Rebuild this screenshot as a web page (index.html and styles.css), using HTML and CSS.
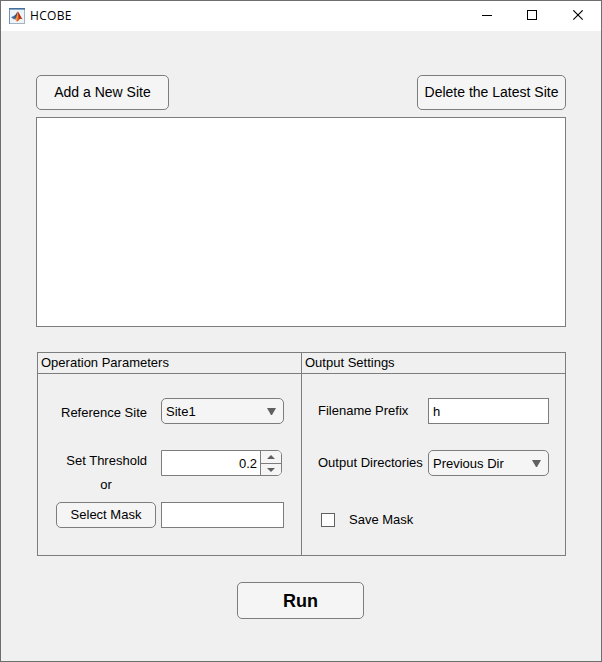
FILE: index.html
```html
<!DOCTYPE html>
<html lang="en">
<head>
<meta charset="utf-8">
<title>HCOBE</title>
<link rel="stylesheet" href="styles.css">
</head>
<body>
<div class="window">
  <header class="titlebar">
    <svg class="app-icon" width="16" height="16" viewBox="0 0 16 16">
      <rect x=".5" y=".5" width="15" height="15" fill="#eef3f7" stroke="#a3b3c2"/>
      <path d="M0 .8h16" stroke="#44719c" stroke-width="1.600"/>
      <path d="M.5 1v15" stroke="#7891a8"/>
      <path d="M2 9.200l3-1.400 2.200 1.700L5 11.400z" fill="#3b78b5"/>
      <path d="M5 7.800c2-.3 2.200-3.500 4-4.300L7.500 9.300 5.800 11z" fill="#335780"/>
      <path d="M9 3.500c1.400 1.500 2.500 5.500 4.800 8-2-1.300-3-.7-3.800.5-.7 1-1.500 1.500-2.200 1.500-.3-1.600-1-2.200-2.200-2.300C7.500 10 8 5.500 9 3.500z" fill="#d9531e"/>
      <path d="M9 4c.2 3 .1 6-1.200 9.200-.4-1-.9-1.600-1.500-1.800C8 9.500 8.400 6.500 9 4z" fill="#f2a23a"/>
      <path d="M9.200 4c1.400 2 2.300 5 4 7-1.500-1-2.400-.7-3 .2z" fill="#a92d20"/>
    </svg>
    <span class="title">HCOBE</span>
    <svg class="controls" width="102" height="12" viewBox="0 0 102 12" fill="none" stroke="#000">
      <path d="M0 5.500h10" shape-rendering="crispEdges"/>
      <rect x="45.500" y=".5" width="9" height="9" shape-rendering="crispEdges"/>
      <path d="M91.300.3l9.400 9.400m0-9.400l-9.400 9.400" stroke-width="1.100"/>
    </svg>
  </header>
  <main class="content">
    <div class="site-actions">
      <button class="button add">Add a New Site</button>
      <button class="button delete">Delete the Latest Site</button>
    </div>
    <div class="site-list"></div>
    <div class="panels">
      <section class="panel operation">
        <h2>Operation Parameters</h2>
        <div class="form">
          <label class="reference-label">Reference Site</label>
          <div class="dropdown"><span>Site1</span><svg width="9" height="7"><path d="M0 0h9L5 7H4z" fill="#606060"/></svg></div>
          <label class="threshold-label">Set Threshold</label>
          <div class="spinner">
            <span class="value">0.2</span>
            <div class="steps">
              <div><svg width="8" height="4"><path d="M0 4L4 0l4 4z" fill="#606060"/></svg></div>
              <div><svg width="8" height="4"><path d="M0 0h8L4 4z" fill="#606060"/></svg></div>
            </div>
          </div>
          <span class="or">or</span>
          <button class="button mask">Select Mask</button>
          <div class="field"></div>
        </div>
      </section>
      <section class="panel output">
        <h2>Output Settings</h2>
        <div class="form">
          <label>Filename Prefix</label>
          <div class="field">h</div>
          <label>Output Directories</label>
          <div class="dropdown"><span>Previous Dir</span><svg width="9" height="7"><path d="M0 0h9L5 7H4z" fill="#606060"/></svg></div>
          <label class="check"><span class="box"></span>Save Mask</label>
        </div>
      </section>
    </div>
    <button class="button run">Run</button>
  </main>
</div>
</body>
</html>
```
FILE: styles.css
```css
* { box-sizing: border-box; }
body { margin: 0; font: 13px/16px "Liberation Sans", Arial, sans-serif; color: #000; }
.window { width: 602px; height: 662px; border: 1px solid #6e6e6e; background: #f0f0f0; }
.titlebar { display: flex; align-items: flex-start; height: 30px; padding: 7px 17px 0 8px; background: #fff; }
.app-icon { flex: none; }
.title { margin-left: 5px; font: 12px/16px "Open Sans", "Noto Sans", sans-serif; letter-spacing: .3px; }
.controls { margin: 2px 0 0 auto; }
.content { padding: 44px 35px 0; }
.site-actions { display: flex; justify-content: space-between; }
.button { display: block; margin: 0; padding: 0; border: 1px solid #7d7d7d; border-radius: 5px; background: #f5f5f5; color: #000; font: inherit; white-space: nowrap; }
.add, .delete { height: 35px; padding-bottom: 2px; font-size: 14px; }
.add { width: 133px; }
.delete { width: 149px; }
.site-list { height: 210px; margin-top: 7px; border: 1px solid #7d7d7d; background: #fff; }
.panels { display: flex; height: 204px; margin: 25px 0 0 1px; }
.panel { width: 265px; border: 1px solid #7d7d7d; }
.output { margin-left: -1px; }
.panel h2 { height: 21px; margin: 0; padding: 2px 3px 0; border-bottom: 1px solid #7d7d7d; font: inherit; }
.form { display: grid; grid-template-rows: repeat(3, 26px); row-gap: 26px; white-space: nowrap; }
.operation .form { grid-template-columns: 100px 123px; column-gap: 5px; padding: 24px 0 0 18px; }
.output .form { grid-template-columns: 105px 121px; column-gap: 5px; padding: 24px 0 0 16px; }
.operation label { padding-right: 9px; text-align: right; }
.operation .reference-label { padding-top: 7px; }
.operation .threshold-label { padding-top: 3px; }
.output label { padding-top: 5px; }
.dropdown, .field { display: flex; align-items: center; border: 1px solid #7d7d7d; padding: 0 4px; }
.dropdown { justify-content: space-between; padding-right: 7px; border-radius: 5px; background: #f5f5f5; }
.dropdown span { padding-top: 2px; }
.field { padding-top: 2px; background: #fff; }
.spinner { display: flex; width: 121px; border: 1px solid #7d7d7d; border-radius: 0 5px 5px 0; background: #fff; overflow: hidden; }
.value { flex: 1; padding: 5px 3px 0 0; text-align: right; }
.steps { width: 21px; border-left: 1px solid #7d7d7d; background: #f5f5f5; }
.steps div { display: flex; align-items: center; justify-content: center; height: 12px; }
.steps div:first-child { height: 13px; border-bottom: 1px solid #7d7d7d; }
.or { grid-column: 1; grid-row: 2; align-self: end; justify-self: center; margin-bottom: -17px; }
.reference-label, .reference-label + .dropdown { grid-row: 1; }
.threshold-label, .spinner { grid-row: 2; }
.threshold-label { grid-column: 1; }
.spinner { grid-column: 2; }
.mask, .mask + .field { grid-row: 3; }
.output .check { grid-column: 1 / 3; display: flex; gap: 14px; align-items: center; padding: 9px 0 0 3px; }
.box { width: 14px; height: 14px; border: 1px solid #606060; background: #fff; }
.run { width: 127px; height: 37px; margin: 26px 0 0 201px; font-size: 18px; font-weight: bold; }
```
